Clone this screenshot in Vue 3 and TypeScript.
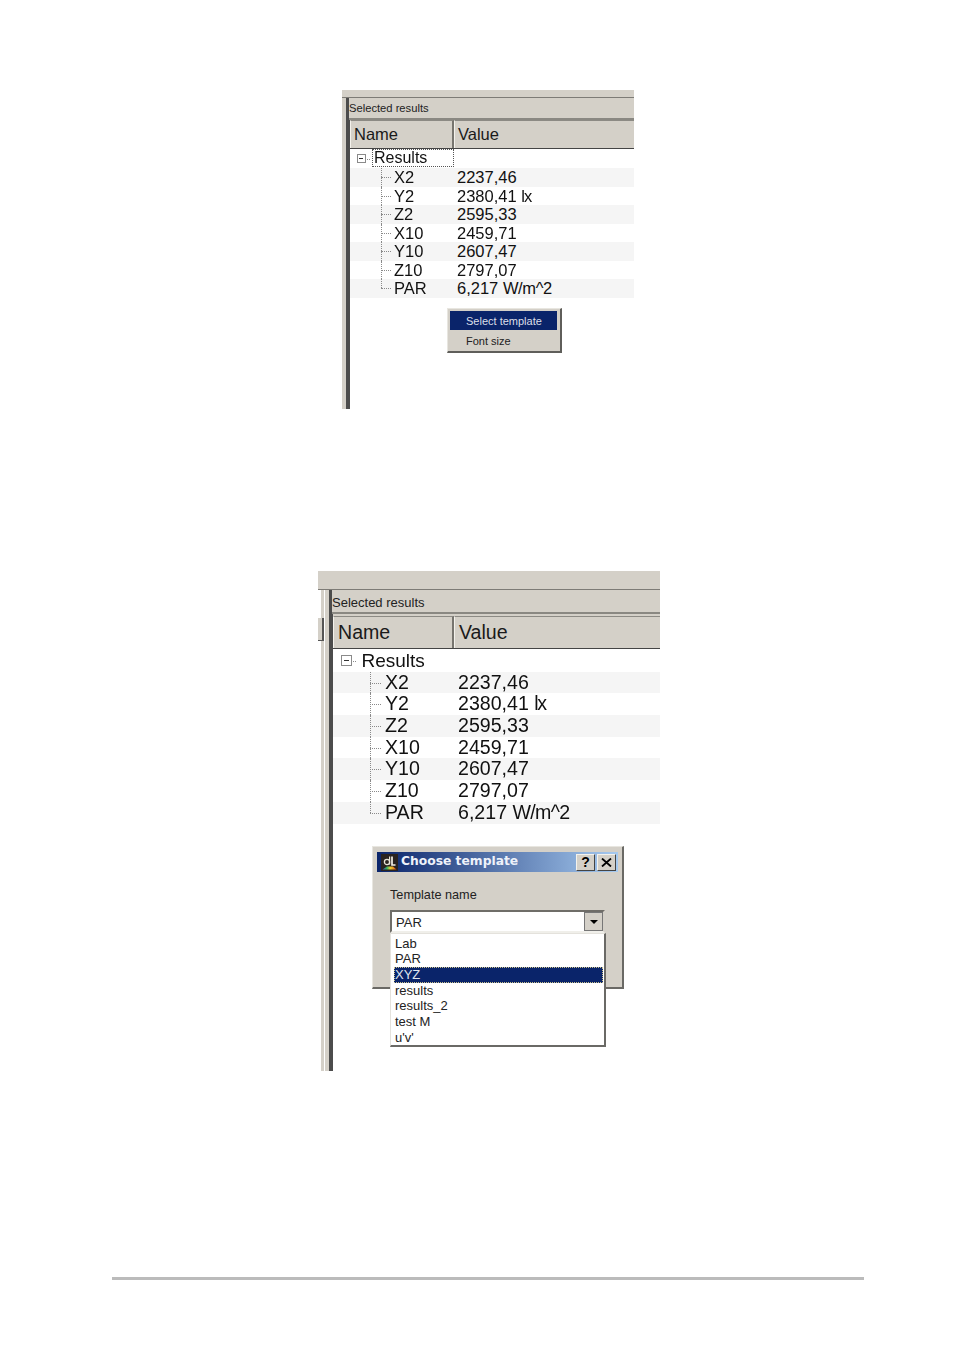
<script setup lang="ts">
interface Row { name: string; value: string; unit?: string; unitClass?: string }
const rows: Row[] = [
  { name: 'X2', value: '2237,46' },
  { name: 'Y2', value: '2380,41 ', unit: 'lx', unitClass: 'lux' },
  { name: 'Z2', value: '2595,33' },
  { name: 'X10', value: '2459,71' },
  { name: 'Y10', value: '2607,47' },
  { name: 'Z10', value: '2797,07' },
  { name: 'PAR', value: '6,217 ', unit: 'W/m^2', unitClass: 'watt' },
]
const templates = ['Lab', 'PAR', 'XYZ', 'results', 'results_2', 'test M', "u'v'"]
const panels = ['small', 'large']
</script>

<template>
  <main class="page">
    <section v-for="p in panels" :key="p" class="panel" :class="p">
      <div class="strip"></div>
      <div class="body">
        <div class="rail">
          <div v-if="p === 'large'" class="stub"></div>
        </div>
        <div class="content">
          <div class="caption">Selected results</div>
          <div class="thead">
            <div class="th th-name">Name</div>
            <div class="th th-value">Value</div>
          </div>
          <div class="root">
            <span class="expander"></span>
            <span class="root-label">Results</span>
          </div>
          <div v-for="(r, i) in rows" :key="r.name" class="row" :class="{ stripe: i % 2 === 0, last: i === rows.length - 1 }">
            <div class="cell-name">{{ r.name }}</div>
            <div class="cell-value">{{ r.value }}<span v-if="r.unit" class="unit" :class="r.unitClass">{{ r.unit }}</span></div>
          </div>
        </div>
      </div>

      <div v-if="p === 'small'" class="menu">
        <div class="menu-item active">Select template</div>
        <div class="menu-item">Font size</div>
      </div>

      <div v-else class="dialog">
        <div class="titlebar">
          <svg class="app-icon" viewBox="0 0 17 17" width="17" height="17">
            <defs>
              <linearGradient id="spectrum" x1="0" x2="1" y1="0" y2="0">
                <stop offset="0" stop-color="#3a4fd0" />
                <stop offset="0.3" stop-color="#30b060" />
                <stop offset="0.55" stop-color="#e8d030" />
                <stop offset="0.8" stop-color="#e88a20" />
                <stop offset="1" stop-color="#d83020" />
              </linearGradient>
            </defs>
            <rect width="17" height="17" fill="#2a2320" />
            <circle cx="6" cy="8" r="2.6" fill="none" stroke="#e8e4d8" stroke-width="1.3" />
            <path d="M8.6 2.5V10.5" fill="none" stroke="#e8e4d8" stroke-width="1.2" />
            <path d="M11 2.5V11H14.5" fill="none" stroke="#f2efe6" stroke-width="1.7" />
            <path d="M1.5 15.5L6 12.5H12L15.5 15.5Z" fill="url(#spectrum)" />
          </svg>
          <span class="title">Choose template</span>
          <span class="cap-btn">?</span>
          <span class="cap-btn close">
            <svg viewBox="0 0 11 9" width="11" height="9"><path d="M1 0.5L10 8.5M10 0.5L1 8.5" stroke="#000" stroke-width="1.8" /></svg>
          </span>
        </div>
        <div class="dialog-body">
          <div class="field-label">Template name</div>
          <div class="combo">
            <span class="combo-value">PAR</span>
            <span class="combo-btn"><i class="arrow"></i></span>
          </div>
        </div>
        <ul class="list">
          <li v-for="t in templates" :key="t" class="option" :class="{ selected: t === 'XYZ' }">{{ t }}</li>
        </ul>
      </div>
    </section>
    <hr class="rule" />
  </main>
</template>

<style>
html, body { margin: 0; background: #fff; }
</style>

<style scoped>
.page {
  width: 954px;
  height: 1350px;
  padding-top: 90px;
  box-sizing: border-box;
  overflow: hidden;
  background: #fff;
  font-family: "Liberation Sans", Arial, sans-serif;
  color: #111;
}
.panel { position: relative; display: flex; flex-direction: column; filter: blur(0.3px); }
.small { width: 292px; height: 319px; margin-left: 342px; }
.large { width: 342px; height: 500px; margin-left: 318px; margin-top: 162px; }

.strip { background: #d4d0c8; border-bottom: 1px solid #7d7b76; flex: none; }
.small .strip { height: 7px; }
.large .strip { height: 18px; }

.body { flex: 1; display: flex; min-height: 0; }
.rail { flex: none; position: relative; box-sizing: border-box; }
.small .rail { width: 8px; background: linear-gradient(90deg, #d4d0c8 0 4px, #4c4c4c 4px 8px); }
.large .rail {
  width: 15px;
  background: linear-gradient(90deg, #fff 0 3px, #d4d0c8 3px 6px, #fff 6px 7px, #d4d0c8 7px 11px, #4c4c4c 11px 15px);
}
.stub {
  position: absolute;
  left: 0;
  top: 28px;
  width: 6px;
  height: 23px;
  box-sizing: border-box;
  background: #d4d0c8;
  border-right: 2px solid #555;
  border-bottom: 1px solid #555;
}

.content { flex: 1; min-width: 0; }
.caption {
  position: relative;
  background: #d4d0c8;
  color: #222;
  box-sizing: border-box;
  display: flex;
  align-items: center;
  margin-left: -1px;
  border-bottom: 2px solid #8a8882;
}
.small .caption { height: 22px; font-size: 11.2px; }
.large .caption { height: 24px; font-size: 13px; padding-top: 2px; }

.thead { display: flex; background: #d4d0c8; box-sizing: border-box; }
.small .thead { height: 29px; font-size: 16.5px; border-bottom: 1px solid #444; }
.large .thead { height: 35px; font-size: 19.6px; border-bottom: 1px solid #444; border-top: 2px solid #d4d0c8; }
.th {
  box-sizing: border-box;
  display: flex;
  align-items: center;
  color: #1a1a1a;
  border-top: 1px solid #8c8a84;
  border-left: 1px solid #f4f2ec;
}
.small .th-name { width: 104px; padding-left: 3px; border-right: 2px solid #77756f; }
.large .th-name { width: 121px; padding-left: 4px; border-right: 2px solid #77756f; }
.th-value { flex: 1; border-left: 1px solid #f4f2ec; }
.small .th-value { padding-left: 3px; }
.large .th-value { padding-left: 4px; }

.root { position: relative; box-sizing: border-box; }
.small .root { height: 19px; font-size: 16px; }
.large .root { height: 22.7px; font-size: 19px; }
.expander {
  position: absolute;
  box-sizing: border-box;
  border: 1px solid #8a8a8a;
  background: linear-gradient(#333, #333) center / 60% 1px no-repeat #fff;
}
.expander::before {
  content: "";
  position: absolute;
  left: 100%;
  top: 50%;
  width: 5px;
  border-top: 1px dotted #8a8a8a;
}
.small .expander { left: 7px; top: 5px; width: 9px; height: 9px; }
.large .expander { left: 8px; top: 6px; width: 11px; height: 11px; }
.root-label { position: absolute; box-sizing: border-box; }
.small .root-label {
  left: 22px;
  top: 0;
  width: 82px;
  height: 18px;
  line-height: 16px;
  padding-left: 1px;
  border: 1px dotted #555;
}
.large .root-label { left: 28.5px; top: 0; line-height: 24px; }

.row { display: flex; position: relative; }
.small .row { height: 18.5px; line-height: 18px; font-size: 16.5px; }
.large .row { height: 21.7px; line-height: 21.7px; font-size: 19.6px; }
.cell-value { white-space: pre; }
.stripe { background: #f5f5f5; }
.small .lux { letter-spacing: -1px; }
.small .watt { letter-spacing: -0.35px; }
.large .lux { letter-spacing: -1.4px; }
.large .watt { letter-spacing: -0.7px; }
.cell-name { flex: none; box-sizing: border-box; position: relative; }
.small .cell-name { width: 107px; padding-left: 44px; }
.large .cell-name { width: 125px; padding-left: 52px; }
.cell-name::before {
  content: "";
  position: absolute;
  top: 0;
  bottom: 0;
  border-left: 1px dotted #8a8a8a;
}
.cell-name::after {
  content: "";
  position: absolute;
  top: 50%;
  border-top: 1px dotted #8a8a8a;
}
.small .cell-name::before { left: 31px; }
.small .cell-name::after { left: 31px; width: 10px; }
.large .cell-name::before { left: 37px; }
.large .cell-name::after { left: 37px; width: 11px; }
.last .cell-name::before { bottom: 50%; }

.menu {
  position: absolute;
  left: 105px;
  top: 218px;
  width: 115px;
  height: 45px;
  box-sizing: border-box;
  padding: 2px 3px 0 2px;
  background: #d4d0c8;
  border: 1px solid #e8e6e0;
  border-right: 2px solid #5f5e5a;
  border-bottom: 2px solid #5f5e5a;
  font-size: 11px;
  color: #222;
}
.menu-item { height: 20px; line-height: 20px; padding-left: 16px; }
.menu-item.active { background: #0a246a; color: #dcdfe8; height: 19px; line-height: 20px; margin-bottom: 1px; }

.dialog {
  position: absolute;
  left: 54px;
  top: 275px;
  width: 252px;
  height: 143px;
  box-sizing: border-box;
  padding: 5px 4px 0 4px;
  background: #d4d0c8;
  border: 1px solid #e8e6e0;
  border-right: 2px solid #6a6965;
  border-bottom: 2px solid #6a6965;
}
.titlebar {
  height: 20px;
  display: flex;
  align-items: center;
  padding: 0 2px 0 4px;
  background: linear-gradient(90deg, #0a246a 0%, #a6caf0 100%);
}
.app-icon { flex: none; margin-right: 3px; }
.title {
  flex: 1;
  color: #eef2fa;
  font-family: "DejaVu Sans", sans-serif;
  font-weight: 700;
  font-size: 12.3px;
  padding-bottom: 2px;
  white-space: nowrap;
}
.cap-btn {
  flex: none;
  box-sizing: border-box;
  width: 19px;
  height: 17px;
  margin-left: 2px;
  display: flex;
  align-items: center;
  justify-content: center;
  background: #d4d0c8;
  border: 1px solid;
  border-color: #f4f2ec #444 #444 #f4f2ec;
  font-weight: 700;
  font-size: 14px;
  color: #000;
}
.dialog-body { padding: 15px 0 0 13px; }
.field-label { font-size: 12.7px; line-height: 16px; color: #222; }
.combo {
  margin-top: 7px;
  width: 215px;
  height: 23px;
  box-sizing: border-box;
  display: flex;
  align-items: center;
  justify-content: space-between;
  background: #fff;
  border: 2px solid #6f6d68;
  border-right-color: #d4d0c8;
  border-bottom-color: #f0efea;
  font-size: 13px;
  color: #222;
}
.combo-value { padding: 2px 0 0 4px; }
.combo-btn {
  width: 19px;
  height: 19px;
  display: flex;
  align-items: center;
  justify-content: center;
  background: #d4d0c8;
  border: 1px solid #777;
  box-sizing: border-box;
}
.arrow {
  width: 0;
  height: 0;
  border: 4px solid transparent;
  border-top: 4px solid #000;
  border-bottom: 0;
}
.list {
  position: absolute;
  left: 17px;
  top: 86px;
  width: 216px;
  height: 114px;
  margin: 0;
  padding: 1.5px 1px 0 3px;
  box-sizing: border-box;
  list-style: none;
  background: #fff;
  border: 1px solid #e4e2dc;
  border-right: 2px solid #6a6965;
  border-bottom: 2px solid #6a6965;
  font-size: 13px;
  color: #222;
}
.option { height: 15.7px; line-height: 15.7px; padding-left: 1px; }
.option.selected {
  background: #0a246a;
  color: #dfe3ee;
  outline: 1px dotted #c9c08a;
  outline-offset: -1px;
}

.rule {
  margin: 206px 0 0 112px;
  width: 752px;
  height: 3px;
  border: 0;
  background: #bbb;
}
</style>
